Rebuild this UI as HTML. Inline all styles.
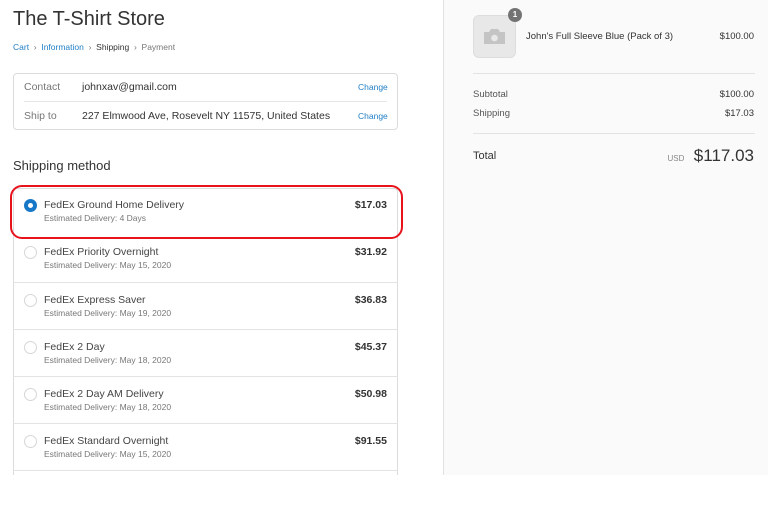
<!DOCTYPE html>
<html><head><meta charset="utf-8"><style>
*{margin:0;padding:0;box-sizing:border-box}
body{width:768px;height:475px;overflow:hidden;background:#fff;font-family:"Liberation Sans",sans-serif;color:#333;position:relative}
.a{position:absolute;white-space:nowrap}
.right{position:absolute;left:443px;top:0;width:325px;height:475px;background:#fafafa;border-left:1px solid #e1e1e1}
.blue{color:#1f7fc6}
.row{position:absolute;left:13px;width:385px;height:47px;border-top:1px solid #e3e3e3}
.row .r{position:absolute;left:11px;top:11px;width:13px;height:13px;border:1px solid #d6d6d6;border-radius:50%;background:#fff}
.row .n{position:absolute;left:31px;top:11px;font-size:10.5px;color:#444}
.row .d{position:absolute;left:31px;top:25px;font-size:8.5px;color:#777}
.row .p{position:absolute;right:11px;top:11px;font-size:10.5px;font-weight:bold;color:#333}
</style></head><body>
<div class="a" style="left:13px;top:8px;font-size:20px;color:#333">The T-Shirt Store</div>
<div class="a" style="left:13px;top:42px;font-size:8.5px;color:#777"><span class="blue">Cart</span> &nbsp;›&nbsp; <span class="blue">Information</span> &nbsp;›&nbsp; <span style="color:#333">Shipping</span> &nbsp;›&nbsp; Payment</div>
<div class="a" style="left:13px;top:73px;width:385px;height:57px;border:1px solid #dcdcdc;border-radius:4px"></div>
<div class="a" style="left:24px;top:101px;width:363px;border-top:1px solid #e6e6e6"></div>
<div class="a" style="left:24px;top:81px;font-size:10.5px;color:#777">Contact</div>
<div class="a" style="left:82px;top:81px;font-size:10.5px;color:#333">johnxav@gmail.com</div>
<div class="a blue" style="left:358px;top:82px;font-size:8.5px">Change</div>
<div class="a" style="left:24px;top:110px;font-size:10.5px;color:#777">Ship to</div>
<div class="a" style="left:82px;top:110px;font-size:10.5px;color:#333">227 Elmwood Ave, Rosevelt NY 11575, United States</div>
<div class="a blue" style="left:358px;top:111px;font-size:8.5px">Change</div>
<div class="a" style="left:13px;top:158px;font-size:13px;color:#333">Shipping method</div>
<div class="a" style="left:13px;top:188px;width:385px;height:287px;border:1px solid #dcdcdc;border-bottom:none;border-radius:4px 4px 0 0"></div>
<div class="row" style="top:188px;border-top:none"><div class="r" style="border:4px solid #1878c8;background:#fff"></div><div class="n">FedEx Ground Home Delivery</div><div class="d">Estimated Delivery: 4 Days</div><div class="p">$17.03</div></div>
<div class="row" style="top:235px;border-top:none"><div class="r"></div><div class="n">FedEx Priority Overnight</div><div class="d">Estimated Delivery: May 15, 2020</div><div class="p">$31.92</div></div>
<div class="row" style="top:282px"><div class="r"></div><div class="n">FedEx Express Saver</div><div class="d">Estimated Delivery: May 19, 2020</div><div class="p">$36.83</div></div>
<div class="row" style="top:329px"><div class="r"></div><div class="n">FedEx 2 Day</div><div class="d">Estimated Delivery: May 18, 2020</div><div class="p">$45.37</div></div>
<div class="row" style="top:376px"><div class="r"></div><div class="n">FedEx 2 Day AM Delivery</div><div class="d">Estimated Delivery: May 18, 2020</div><div class="p">$50.98</div></div>
<div class="row" style="top:423px"><div class="r"></div><div class="n">FedEx Standard Overnight</div><div class="d">Estimated Delivery: May 15, 2020</div><div class="p">$91.55</div></div>
<div class="row" style="top:470px"></div>
<div class="a" style="left:10px;top:185px;width:393px;height:54px;border:2.5px solid #e8121b;border-radius:12px"></div>
<div class="right"></div>
<div class="a" style="left:473px;top:15px;width:43px;height:43px;background:#e8e8e8;border:1px solid #ddd;border-radius:6px"></div>
<svg class="a" style="left:483px;top:28px" width="23" height="17" viewBox="0 0 23 17"><path d="M1 4h5l2-3h7l2 3h5v12H1z" fill="#c4c4c4"/><circle cx="11.5" cy="10" r="3.3" fill="#e8e8e8"/></svg>
<div class="a" style="left:508px;top:8px;width:14px;height:14px;border-radius:50%;background:#737373;color:#fff;font-size:8px;font-weight:bold;text-align:center;line-height:14px">1</div>
<div class="a" style="left:526px;top:31px;font-size:9.5px;color:#333">John's Full Sleeve Blue (Pack of 3)</div>
<div class="a" style="right:14px;top:31px;font-size:9.5px;color:#333">$100.00</div>
<div class="a" style="left:473px;top:73px;width:282px;border-top:1px solid #e3e3e3"></div>
<div class="a" style="left:473px;top:89px;font-size:9.5px;color:#555">Subtotal</div>
<div class="a" style="right:14px;top:89px;font-size:9.5px;color:#333">$100.00</div>
<div class="a" style="left:473px;top:108px;font-size:9.5px;color:#555">Shipping</div>
<div class="a" style="right:14px;top:108px;font-size:9.5px;color:#333">$17.03</div>
<div class="a" style="left:473px;top:133px;width:282px;border-top:1px solid #e3e3e3"></div>
<div class="a" style="left:473px;top:150px;font-size:11px;color:#333">Total</div>
<div class="a" style="right:14px;top:146px;font-size:17px;color:#333"><span style="font-size:8px;color:#888">USD</span>&nbsp; $117.03</div>
</body></html>
